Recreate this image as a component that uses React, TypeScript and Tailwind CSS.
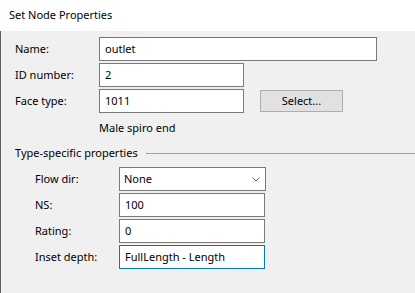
import React from 'react';

interface FieldRowProps {
    label: string;
    children: React.ReactNode;
}

const FieldRow: React.FC<FieldRowProps> = ({ label, children }) => {
    return (
        <div className="flex items-center h-[24px]">
            <div className="w-[84px] shrink-0">{label}</div>
            {children}
        </div>
    );
}

interface TextBoxProps {
    value: string;
    width: string;
    focused?: boolean;
}

const TextBox: React.FC<TextBoxProps> = ({ value, width, focused = false }) => {
    return (
        <div className={`${width} h-[24px] bg-white border flex items-center pl-[5px] ${focused ? 'border-[#0078d7]' : 'border-[#7a7a7a]'}`}>
            {value}
        </div>
    );
}

export default function App() {
    return (
        <div className="w-[415px] h-[293px] flex flex-col text-[11px] text-black overflow-hidden" style={{ fontFamily: '"Noto Sans", "Segoe UI", sans-serif' }}>
            <div className="h-[31px] bg-white flex items-center pl-[9px] shrink-0">Set Node Properties</div>

            <div className="flex-1 bg-[#f0f0f0] border-l border-[#5f5f5f] pt-[6px] flex flex-col">
                <div className="pl-[14px] flex flex-col gap-[2px]">
                    <FieldRow label="Name:">
                        <TextBox value="outlet" width="w-[278px]" />
                    </FieldRow>
                    <FieldRow label="ID number:">
                        <TextBox value="2" width="w-[145px]" />
                    </FieldRow>
                    <FieldRow label="Face type:">
                        <TextBox value="1011" width="w-[145px]" />
                        <button className="ml-[16px] w-[83px] h-[22px] bg-[#e1e1e1] border border-[#adadad] flex items-center justify-center">
                            Select...
                        </button>
                    </FieldRow>
                </div>

                <div className="pl-[98px] mt-[7px] h-[16px] leading-[16px]">Male spiro end</div>

                <div className="pl-[14px] mt-[9px] h-[16px] leading-[16px] flex items-center gap-[8px]">
                    <span>Type-specific properties</span>
                    <div className="flex-1 h-px bg-[#a0a0a0]"></div>
                </div>

                <div className="pl-[34px] mt-[6px] flex flex-col gap-[2px]">
                    <FieldRow label="Flow dir:">
                        <div className="w-[147px] h-[24px] bg-white border border-[#7a7a7a] flex items-center justify-between pl-[4px] pr-[4px]">
                            <span>None</span>
                            <svg width="8" height="5" viewBox="0 0 8 5" fill="none" className="mr-[1px]">
                                <path d="M0.5 0.5 L4 4 L7.5 0.5" stroke="#606060" strokeWidth="1" />
                            </svg>
                        </div>
                    </FieldRow>
                    <FieldRow label="NS:">
                        <TextBox value="100" width="w-[146px]" />
                    </FieldRow>
                    <FieldRow label="Rating:">
                        <TextBox value="0" width="w-[146px]" />
                    </FieldRow>
                    <FieldRow label="Inset depth:">
                        <TextBox value="FullLength - Length" width="w-[146px]" focused />
                    </FieldRow>
                </div>
            </div>
        </div>
    );
}
